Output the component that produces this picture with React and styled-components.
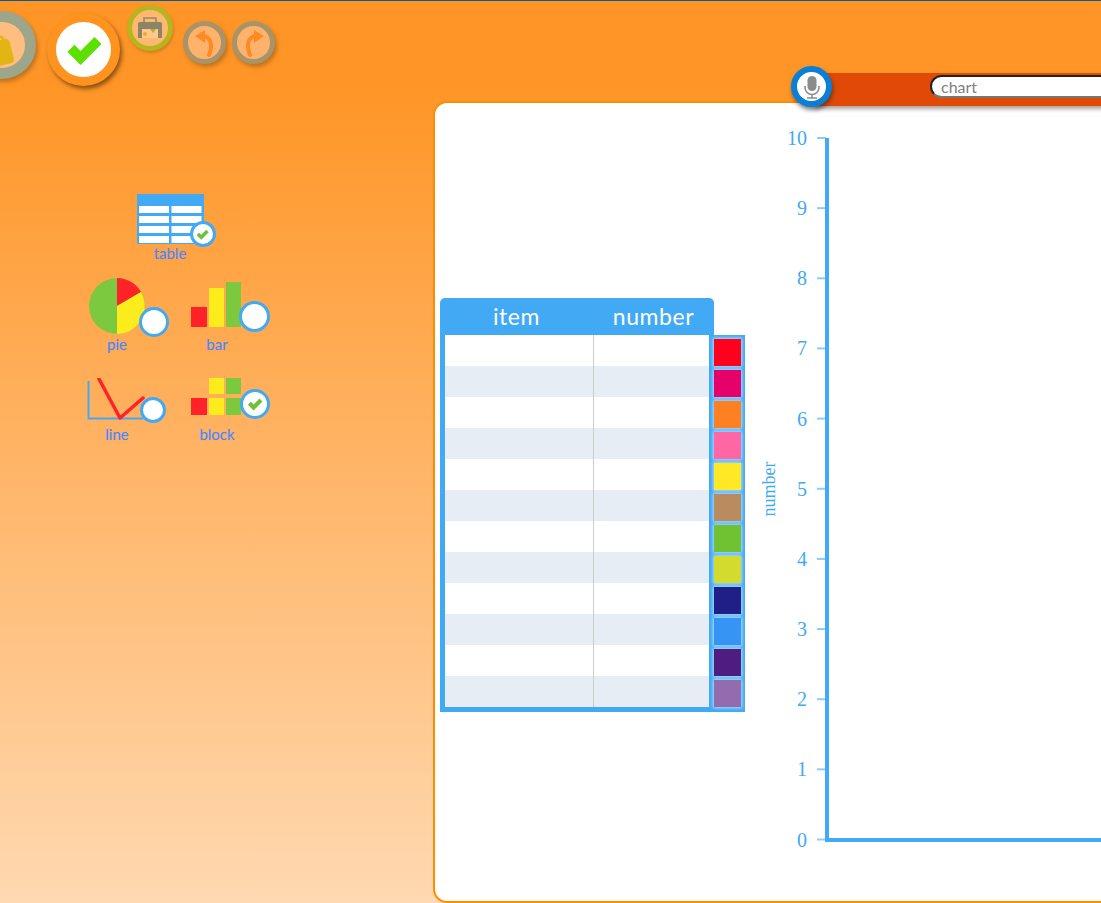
import React from "react";
import styled, { createGlobalStyle } from "styled-components";

const Global = createGlobalStyle`
  html, body { margin: 0; padding: 0; }
  body { font-family: "Lato", "Open Sans", sans-serif; overflow: hidden; }
`;

const Page = styled.div`
  position: relative;
  width: 1101px;
  height: 903px;
  overflow: hidden;
  display: flex;
  flex-direction: column;
  box-sizing: border-box;
  border-top: 1px solid #0a5a96;
  background: linear-gradient(#ff9526 0, #ff9526 9%, #ffd9b1 100%);
`;

const TopBar = styled.header`
  height: 100px;
  flex: none;
`;

const Toolbar = styled.div`
  display: flex;
  align-items: flex-start;
  margin-left: -32px;
`;

const RoundButton = styled.button`
  flex: none;
  width: ${(p) => p.$size}px;
  height: ${(p) => p.$size}px;
  margin: ${(p) => p.$top}px 0 0 ${(p) => p.$left}px;
  padding: 0;
  box-sizing: border-box;
  border-radius: 50%;
  border: ${(p) => p.$ring}px solid ${(p) => p.$ringColor};
  background: ${(p) => p.$fill};
  box-shadow: ${(p) => p.$shadow || "2px 3px 4px rgba(110, 70, 20, 0.45)"};
  display: flex;
  align-items: center;
  justify-content: center;
  overflow: hidden;
`;

const Body = styled.main`
  flex: 1;
  display: flex;
  min-height: 0;
`;

const Sidebar = styled.nav`
  flex: none;
  width: 433px;
  box-sizing: border-box;
  padding: 93px 0 0 67px;
`;

const TypeGrid = styled.div`
  display: grid;
  grid-template-columns: 100px 100px;
  width: 200px;
`;

const TypeItem = styled.div`
  grid-column: ${(p) => (p.$wide ? "1 / span 2" : "auto")};
  height: ${(p) => p.$h}px;
  display: flex;
  flex-direction: column;
  align-items: center;
  padding-left: ${(p) => p.$pad || 0}px;
`;

const IconWrap = styled.div`
  position: relative;
  width: ${(p) => p.$w}px;
  height: ${(p) => p.$h}px;
  line-height: 0;
`;

const Badge = styled.div`
  position: absolute;
  left: ${(p) => p.$x}px;
  top: ${(p) => p.$y}px;
  width: ${(p) => p.$size}px;
  height: ${(p) => p.$size}px;
  box-sizing: border-box;
  border-radius: 50%;
  border: 3px solid #42a9f5;
  background: #fff;
  display: flex;
  align-items: center;
  justify-content: center;
`;

const TypeLabel = styled.span`
  font-size: 15px;
  line-height: 18px;
  color: #3b8cf5;
  text-shadow: 0 0 1px rgba(220, 130, 255, 0.6);
`;

const Panel = styled.section`
  flex: none;
  width: 760px;
  height: 802px;
  box-sizing: border-box;
  background: #fff;
  border: 2px solid #ff8c00;
  border-radius: 14px;
  padding: 195px 0 0 5px;
  display: flex;
  align-items: flex-start;
`;

const DataBlock = styled.div`
  flex: none;
  width: 305px;
  display: flex;
  flex-direction: column;
`;

const TableHead = styled.div`
  width: 274px;
  height: 37px;
  box-sizing: border-box;
  background: #42a9f5;
  border-radius: 5px 5px 0 0;
  display: grid;
  grid-template-columns: 153px 121px;
  color: #fff;
  font-family: "Lato", sans-serif;
  font-size: 23px;
  line-height: 37px;
  text-align: center;
  letter-spacing: 0.6px;
`;

const TableBody = styled.div`
  display: flex;
  background: #42a9f5;
  padding: 0 0 5px 5px;
`;

const Rows = styled.div`
  width: 264px;
`;

const Row = styled.div`
  height: 31px;
  background: ${(p) => (p.$alt ? "#e7edf4" : "#fff")};
  display: grid;
  grid-template-columns: 148px 1fr;
`;

const Cell = styled.div`
  & + & {
    border-left: 1px solid #ccc;
  }
`;

const Palette = styled.div`
  width: 36px;
  box-sizing: border-box;
  padding: 4px 4px 0 5px;
  display: flex;
  flex-direction: column;
  gap: 4px;
`;

const Swatch = styled.div`
  height: 27px;
  background: ${(p) => p.$color};
  box-shadow: 0 0 3px 1px rgba(190, 228, 255, 0.9);
`;

const ChartSvg = styled.svg`
  flex: none;
  margin: -169px 0 0 5px;
  display: block;
`;

const SearchBar = styled.div`
  position: absolute;
  left: 815px;
  top: 72px;
  width: 300px;
  height: 33px;
  box-sizing: border-box;
  background: #e04a06;
  box-shadow: 0 3px 4px rgba(70, 50, 40, 0.45);
  padding: 2px 0 0 115px;
`;

const SearchInput = styled.div`
  width: 300px;
  height: 23px;
  box-sizing: border-box;
  border-radius: 12px 0 0 12px;
  background: #fff;
  border-top: 2px solid #222;
  border-left: 2px solid #222;
  border-bottom: 2px solid #777;
  padding-left: 9px;
  color: #808080;
  font-size: 16px;
  line-height: 19px;
`;

const MicButton = styled.button`
  position: absolute;
  left: 791px;
  top: 65px;
  width: 41px;
  height: 41px;
  box-sizing: border-box;
  padding: 0;
  border-radius: 50%;
  border: 6px solid #0a7fd6;
  background: #fff;
  box-shadow: 1px 3px 4px rgba(40, 40, 40, 0.6);
  display: flex;
  align-items: center;
  justify-content: center;
`;

const Check = ({ size, color }) => (
  <svg width={size} height={size} viewBox="0 0 24 24">
    <path d="M2.5 13 L6.5 9 L10 12.5 L18 4.5 L22 8.5 L10 20.5 Z" fill={color} />
  </svg>
);

const Folder = () => (
  <svg width="56" height="56" viewBox="0 0 56 56">
    <g transform="rotate(-14 28 28)" fill="#e3b514">
      <path d="M14 18 h14 a3 3 0 0 1 3 3 v3 h-17 z" fill="none" stroke="#e3b514" strokeWidth="3" />
      <rect x="-6" y="22" width="44" height="30" rx="5" />
    </g>
  </svg>
);

const Printer = () => (
  <svg width="26" height="24" viewBox="0 0 26 24">
    <path d="M7 7 V2 h12 v5" fill="none" stroke="#96866a" strokeWidth="1.6" />
    <path d="M1 8 a2 2 0 0 1 2-2 h20 a2 2 0 0 1 2 2 v11 h-4 v-6 H5 v6 H1 z" fill="#8a8468" />
    <rect x="5" y="13" width="16" height="9" fill="#ffc88a" />
    <circle cx="8" cy="18" r="2" fill="#f7a822" />
    <path d="M13 13 h6 l-3 4 z" fill="#b5ad3e" />
    <rect x="1" y="17" width="4" height="5" fill="#8a8468" />
    <rect x="21" y="17" width="4" height="5" fill="#8a8468" />
  </svg>
);

const Turn = ({ flip }) => (
  <svg width="26" height="30" viewBox="0 0 26 30" style={flip ? { transform: "scaleX(-1)" } : undefined}>
    <path d="M3 8 L13 2 L13 15 Z" fill="#ff8a24" />
    <path d="M11 8 C19 9 21 17 17 27" fill="none" stroke="#ff8a24" strokeWidth="4" strokeLinecap="round" />
  </svg>
);

const Mic = () => (
  <svg width="20" height="24" viewBox="0 0 20 24">
    <rect x="5.5" y="1" width="9" height="15" rx="4.5" fill="#8c8c8c" />
    <path d="M3 11 v1.5 a7 7 0 0 0 14 0 V11 M10 19.5 V22.5 M5 23 h10" fill="none" stroke="#8c8c8c" strokeWidth="1.6" />
  </svg>
);

const TableIcon = () => (
  <svg width="67" height="50" viewBox="0 0 67 50">
    <rect width="67" height="50" fill="#42a9f5" />
    {[12, 22, 32, 42].map((y) => (
      <g key={y}>
        <rect x="2" y={y} width="30" height="7" fill="#fff" />
        <rect x="34.500" y={y} width="30" height="7" fill="#fff" />
      </g>
    ))}
  </svg>
);

const PieIcon = () => (
  <svg width="58" height="58" viewBox="0 0 58 58">
    <circle cx="29" cy="29" r="28" fill="#7cc940" />
    <path d="M29 29 V1 A28 28 0 0 1 53 15 Z" fill="#ff2228" />
    <path d="M29 29 L53 15 A28 28 0 0 1 29 57 Z" fill="#fdec1c" />
  </svg>
);

const BarIcon = () => (
  <svg width="52" height="46" viewBox="0 0 52 46">
    <rect x="0" y="25" width="16" height="20" fill="#ff2228" />
    <rect x="18" y="6" width="15" height="39" fill="#fdec1c" />
    <rect x="35" y="0" width="15" height="45" fill="#7cc940" />
  </svg>
);

const LineIcon = () => (
  <svg width="60" height="44" viewBox="0 0 60 44">
    <path d="M1.500 3 V40.500 H56" fill="none" stroke="#42a9f5" strokeWidth="2" />
    <path d="M12 1 L33 40 L56 20" fill="none" stroke="#ff2228" strokeWidth="3.500" strokeLinecap="round" strokeLinejoin="round" />
  </svg>
);

const BlockIcon = () => (
  <svg width="52" height="38" viewBox="0 0 52 38">
    <rect x="0" y="20" width="16" height="17" fill="#ff2228" />
    <rect x="18" y="20" width="15" height="17" fill="#fdec1c" />
    <rect x="35" y="20" width="15" height="17" fill="#7cc940" />
    <rect x="18" y="0" width="15" height="16" fill="#fdec1c" />
    <rect x="35" y="0" width="15" height="16" fill="#7cc940" />
  </svg>
);

const swatches = ["#ff001e", "#e5006a", "#ff8022", "#ff66a3", "#ffe927", "#b98b5f", "#70c232", "#d3dc2c", "#1f1f87", "#3694f5", "#4f1c80", "#926cae"];
const ticks = [0, 1, 2, 3, 4, 5, 6, 7, 8, 9, 10];
const AXIS = "#42a9f5";

const Chart = () => (
  <ChartSvg width="360" height="720" viewBox="0 0 360 720">
    <g transform="translate(-750 -120)">
      <text x="776" y="480" fontFamily="Liberation Serif" fontSize="18" fill={AXIS} textAnchor="middle" transform="rotate(-90 776 480)" dy="-1">number</text>
      {ticks.map((t) => {
        const y = 830.5 - t * 70.15;
        return (
          <g key={t}>
            <line x1="817" x2="826" y1={y} y2={y} stroke={AXIS} strokeOpacity="0.6" strokeWidth="2" />
            <text x="807" y={y + 7} fontFamily="Liberation Serif" fontSize="20" fill={AXIS} textAnchor="end">{t}</text>
          </g>
        );
      })}
      <line x1="827" x2="827" y1="129" y2="833" stroke={AXIS} strokeWidth="4" />
      <line x1="825" x2="1120" y1="831" y2="831" stroke={AXIS} strokeWidth="4" />
    </g>
  </ChartSvg>
);

export default function App() {
  return (
    <Page>
      <Global />
      <TopBar>
        <Toolbar>
          <RoundButton $size={68} $top={10} $left={0} $ring={11} $ringColor="#9da68a" $fill="#ffbe80"><Folder /></RoundButton>
          <RoundButton $size={73} $top={12} $left={11} $ring={9} $ringColor="#ff9320" $fill="#fff" $shadow="2px 3px 4px rgba(90, 50, 10, 0.7)"><Check size={42} color="#5ce000" /></RoundButton>
          <RoundButton $size={46} $top={4} $left={7} $ring={5} $ringColor="#b5b51f" $fill="#ffb870" $shadow="1px 2px 3px rgba(110, 70, 20, 0.3)"><Printer /></RoundButton>
          <RoundButton $size={43} $top={20} $left={10} $ring={5} $ringColor="#a89468" $fill="#ffb26b"><Turn /></RoundButton>
          <RoundButton $size={43} $top={20} $left={6} $ring={5} $ringColor="#a89468" $fill="#ffb26b"><Turn flip /></RoundButton>
        </Toolbar>
      </TopBar>
      <Body>
        <Sidebar>
          <TypeGrid>
            <TypeItem $wide $h={83} $pad={6}>
              <IconWrap $w={67} $h={50}>
                <TableIcon />
                <Badge $x={53} $y={27} $size={26}><Check size={15} color="#6fbf3a" /></Badge>
              </IconWrap>
              <TypeLabel>table</TypeLabel>
            </TypeItem>
            <TypeItem $h={101}>
              <IconWrap $w={58} $h={58}>
                <PieIcon />
                <Badge $x={51} $y={30} $size={30} />
              </IconWrap>
              <TypeLabel>pie</TypeLabel>
            </TypeItem>
            <TypeItem $h={101}>
              <IconWrap $w={52} $h={58}>
                <div style={{ height: 5 }} />
                <BarIcon />
                <Badge $x={48} $y={24} $size={31} />
              </IconWrap>
              <TypeLabel>bar</TypeLabel>
            </TypeItem>
            <TypeItem $h={70}>
              <IconWrap $w={60} $h={47}>
                <LineIcon />
                <Badge $x={53} $y={19} $size={26} />
              </IconWrap>
              <TypeLabel>line</TypeLabel>
            </TypeItem>
            <TypeItem $h={70}>
              <IconWrap $w={52} $h={47}>
                <BlockIcon />
                <Badge $x={49} $y={11} $size={30}><Check size={18} color="#6fbf3a" /></Badge>
              </IconWrap>
              <TypeLabel>block</TypeLabel>
            </TypeItem>
          </TypeGrid>
        </Sidebar>
        <Panel>
          <DataBlock>
            <TableHead>
              <span>item</span>
              <span>number</span>
            </TableHead>
            <TableBody>
              <Rows>
                {swatches.map((c, i) => (
                  <Row key={c} $alt={i % 2 === 1}>
                    <Cell />
                    <Cell />
                  </Row>
                ))}
              </Rows>
              <Palette>
                {swatches.map((c) => (
                  <Swatch key={c} $color={c} />
                ))}
              </Palette>
            </TableBody>
          </DataBlock>
          <Chart />
        </Panel>
      </Body>
      <SearchBar>
        <SearchInput>chart</SearchInput>
      </SearchBar>
      <MicButton><Mic /></MicButton>
    </Page>
  );
}
